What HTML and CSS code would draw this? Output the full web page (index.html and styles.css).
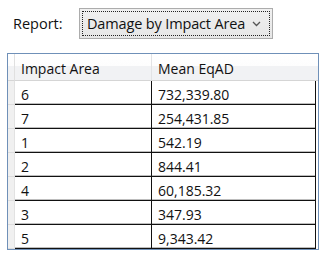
FILE: index.html
```html
<!DOCTYPE html>
<html>
<head>
<meta charset="utf-8">
<link rel="stylesheet" href="styles.css">
</head>
<body>
<div class="top">
  <span class="label">Report:</span>
  <div class="combo">
    <div class="focus">
      <span class="combo-text">Damage by Impact Area</span>
      <svg class="chev" width="9" height="6" viewBox="0 0 9 6"><path d="M1 1 L4.5 4.5 L8 1" fill="none" stroke="#555" stroke-width="1.3"/></svg>
    </div>
  </div>
</div>
<div class="grid">
  <div class="corner"></div><div class="hcell">Impact Area</div><div class="hcell last">Mean EqAD</div><div class="hpad"></div>
  <div class="rh"></div><div class="cell">6</div><div class="cell">732,339.80</div><div class="pad"></div>
  <div class="rh"></div><div class="cell">7</div><div class="cell">254,431.85</div><div class="pad"></div>
  <div class="rh"></div><div class="cell">1</div><div class="cell">542.19</div><div class="pad"></div>
  <div class="rh"></div><div class="cell">2</div><div class="cell">844.41</div><div class="pad"></div>
  <div class="rh"></div><div class="cell">4</div><div class="cell">60,185.32</div><div class="pad"></div>
  <div class="rh"></div><div class="cell">3</div><div class="cell">347.93</div><div class="pad"></div>
  <div class="rh"></div><div class="cell">5</div><div class="cell">9,343.42</div><div class="pad"></div>
</div>
</body>
</html>
```
FILE: styles.css
```css
html, body {
  margin: 0;
  padding: 0;
  background: #fff;
}
body {
  font-family: "Open Sans", "Noto Sans", sans-serif;
  color: #000;
  width: 327px;
  height: 258px;
  overflow: hidden;
}
.top {
  display: flex;
  align-items: center;
  padding: 8px 0 0 13px;
  height: 31px;
}
.label {
  font-size: 14.5px;
  width: 66px;
  color: #111;
}
.combo {
  width: 192px;
  height: 29px;
  border: 1px solid #acacac;
  background: linear-gradient(#f0f0f0, #e6e6e6);
  box-sizing: content-box;
  padding: 0;
  display: flex;
}
.focus {
  flex: 1;
  margin: 2px;
  border: 1px dotted #222;
  display: flex;
  align-items: center;
  padding-left: 4px;
  padding-right: 8px;
}
.combo-text {
  flex: 1;
  font-size: 14.5px;
  letter-spacing: -0.15px;
  white-space: nowrap;
  color: #111;
}
.chev {
  display: block;
}
.grid {
  margin: 14px 0 0 7px;
  width: 310px;
  border: 1px solid #6f90b8;
  display: grid;
  grid-template-columns: 7px 137px 164px 2px;
  grid-auto-rows: 24px;
  grid-template-rows: 27px;
  font-size: 14px;
}
.corner, .hcell, .hpad {
  background: linear-gradient(#ffffff 0%, #fdfdfd 45%, #f1f2f4 46%, #f1f2f4 100%);
  border-bottom: 1px solid #d5d5d5;
  box-sizing: border-box;
}
.corner {
  border-right: 1px solid #e0e0e0;
}
.hcell {
  border-right: 1px solid #e2e3e5;
  padding: 3px 0 0 6px;
  display: flex;
  align-items: center;
  white-space: nowrap;
  color: #111;
}
.hcell.last {
  border-right: none;
}
.rh {
  background: #f0f0f0;
  border-right: 1px solid #e2e2e2;
  border-bottom: 1px solid #dcdcdc;
  box-sizing: border-box;
}
.cell {
  box-sizing: border-box;
  border-right: 1px solid #111;
  border-bottom: 1px solid #111;
  box-shadow: inset 0 -1px 0 #bdbdbd;
  padding: 3px 0 0 6px;
  display: flex;
  align-items: center;
  white-space: nowrap;
  color: #111;
}
.pad {
  background: #fff;
}
```
